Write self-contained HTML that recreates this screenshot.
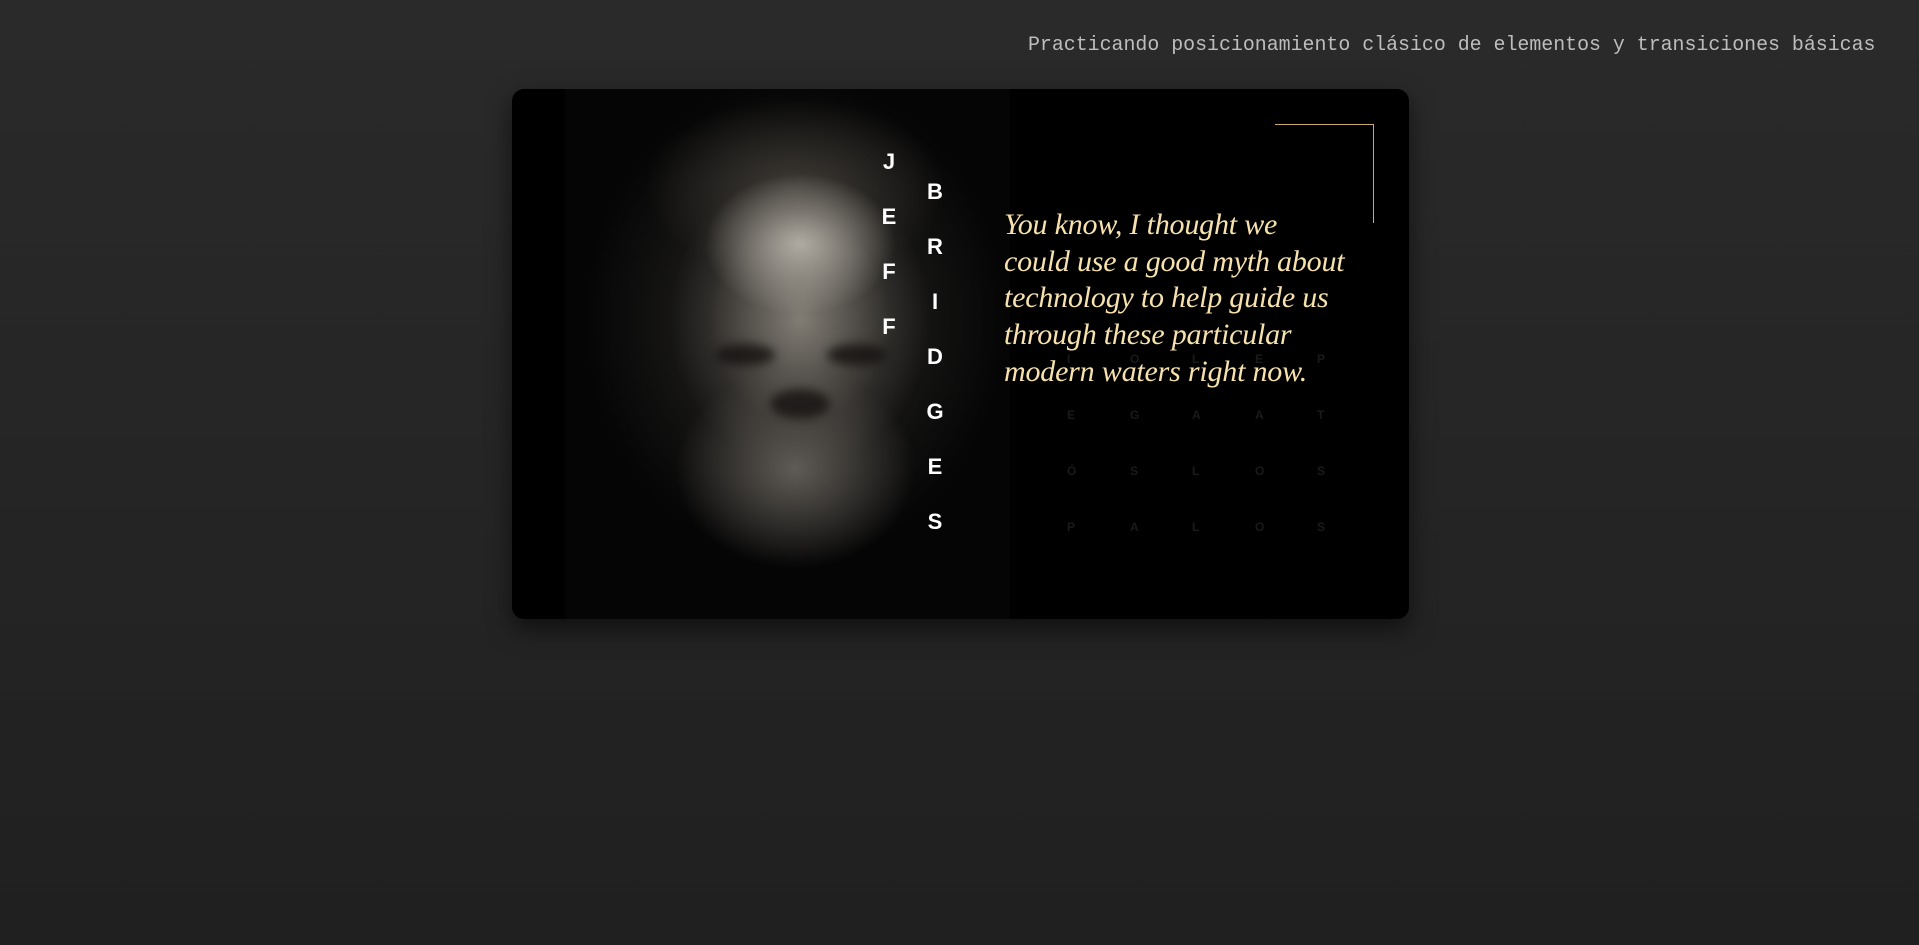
<!DOCTYPE html>
<html><head><meta charset="utf-8">
<style>
html,body{margin:0;padding:0}
body{width:1919px;height:945px;overflow:hidden;background:linear-gradient(#2a2a2a,#202020);position:relative;font-family:"Liberation Sans",sans-serif}
.hdr{position:absolute;left:1028px;top:33px;font-family:"Liberation Mono",monospace;font-size:19.9px;color:#bdbdbd;white-space:nowrap}
.card{position:absolute;left:512px;top:89px;width:897px;height:530px;background:#000;border-radius:12px;box-shadow:0 10px 25px rgba(0,0,0,.55);overflow:hidden}
.photo{position:absolute;left:53px;top:0;width:445px;height:530px;
background:
radial-gradient(ellipse 95px 70px at 235px 155px,rgba(200,195,185,.8),rgba(160,155,145,0) 100%),
radial-gradient(ellipse 130px 150px at 235px 230px,rgba(150,145,135,.8),rgba(90,85,80,.3) 70%,rgba(0,0,0,0) 100%),
radial-gradient(ellipse 120px 100px at 230px 380px,rgba(120,115,108,.75),rgba(0,0,0,0) 100%),
radial-gradient(ellipse 150px 90px at 230px 100px,rgba(70,66,60,.8),rgba(0,0,0,0) 100%),
radial-gradient(ellipse 210px 240px at 230px 230px,rgba(50,48,45,.9),rgba(0,0,0,0) 100%),
#050505}
.eyes{position:absolute;height:22px;border-radius:50%;background:rgba(20,18,16,.8);filter:blur(5px)}
.l{position:absolute;color:#fff;font-weight:bold;font-size:22px;width:20px;text-align:center}
.q{position:absolute;left:492px;top:118px;white-space:nowrap;font-family:"Liberation Serif",serif;font-style:italic;font-size:30px;line-height:36.7px;color:#f7e2ad;letter-spacing:-0.2px}
.g{position:absolute;color:#1a1a1a;font-weight:bold;font-size:12px}
.hl{position:absolute;left:763px;top:35px;width:99px;height:1px;background:#c9ac6c}
.vl{position:absolute;left:861px;top:35px;width:1px;height:99px;background:#c9ac6c}
</style></head><body>
<div class="hdr">Practicando posicionamiento clásico de elementos y transiciones básicas</div>
<div class="card">
 <div class="photo">
  <div class="eyes" style="left:150px;top:255px;width:60px"></div>
  <div class="eyes" style="left:262px;top:255px;width:60px"></div>
  <div class="eyes" style="left:205px;top:300px;width:60px;height:30px"></div>
 </div>
 <div class="g" style="left:555px;top:263px">I</div><div class="g" style="left:618px;top:263px">O</div><div class="g" style="left:680px;top:263px">L</div><div class="g" style="left:743px;top:263px">E</div><div class="g" style="left:805px;top:263px">P</div>
 <div class="g" style="left:555px;top:319px">E</div><div class="g" style="left:618px;top:319px">G</div><div class="g" style="left:680px;top:319px">A</div><div class="g" style="left:743px;top:319px">A</div><div class="g" style="left:805px;top:319px">T</div>
 <div class="g" style="left:555px;top:375px">Ó</div><div class="g" style="left:618px;top:375px">S</div><div class="g" style="left:680px;top:375px">L</div><div class="g" style="left:743px;top:375px">O</div><div class="g" style="left:805px;top:375px">S</div>
 <div class="g" style="left:555px;top:431px">P</div><div class="g" style="left:618px;top:431px">A</div><div class="g" style="left:680px;top:431px">L</div><div class="g" style="left:743px;top:431px">O</div><div class="g" style="left:805px;top:431px">S</div>
 <div class="l" style="left:367px;top:60px">J</div>
 <div class="l" style="left:367px;top:115px">E</div>
 <div class="l" style="left:367px;top:170px">F</div>
 <div class="l" style="left:367px;top:225px">F</div>
 <div class="l" style="left:413px;top:90px">B</div>
 <div class="l" style="left:413px;top:145px">R</div>
 <div class="l" style="left:413px;top:200px">I</div>
 <div class="l" style="left:413px;top:255px">D</div>
 <div class="l" style="left:413px;top:310px">G</div>
 <div class="l" style="left:413px;top:365px">E</div>
 <div class="l" style="left:413px;top:420px">S</div>
 <div class="hl"></div><div class="vl"></div>
 <div class="q">You know, I thought we<br>could use a good myth about<br>technology to help guide us<br>through these particular<br>modern waters right now.</div>
</div>
</body></html>
